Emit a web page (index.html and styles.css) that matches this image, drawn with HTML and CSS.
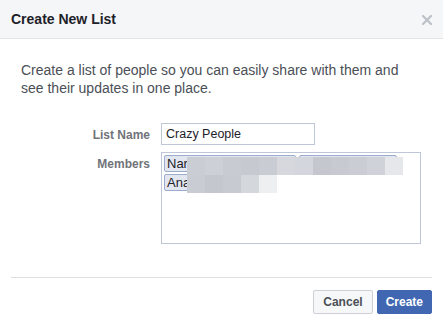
FILE: index.html
```html
<!DOCTYPE html>
<html lang="en">
<head>
  <meta charset="UTF-8" />
  <title>Create New List</title>
  <link rel="stylesheet" href="styles.css">
</head>
<body>
  <div class="dialog">
    <div class="dialog-header">
      <h1>Create New List</h1>
      <svg class="close" width="10" height="10" viewBox="0 0 10 10">
        <path d="M1 1 L9 9 M9 1 L1 9" stroke="#bcc0c7" stroke-width="2.2" stroke-linecap="square" />
      </svg>
    </div>

    <div class="dialog-body">
      <p class="intro">Create a list of people so you can easily share with them and see their updates in one place.</p>

      <div class="form">
        <label class="label">List Name</label>
        <input class="text-input" type="text" value="Crazy People" />

        <label class="label">Members</label>
        <div class="members">
          <span class="token token-a">Nar</span>
          <span class="token token-b"></span>
          <span class="token token-c">Ana</span>
          <div class="blur blur-1">
            <i style="background:#cacdd3"></i><i style="background:#cdd0d6"></i><i style="background:#c8cbd2"></i><i style="background:#c6c9cf"></i><i style="background:#c9ccd2"></i><i style="background:#d6d8dd"></i><i style="background:#d3d6dc"></i><i style="background:#c4c7cd"></i><i style="background:#c7cad0"></i><i style="background:#cacdd3"></i><i style="background:#cfd2d8"></i><i style="background:#e6e7eb"></i>
          </div>
          <div class="blur blur-2">
            <i style="background:#c9ccd2"></i><i style="background:#c4c7cd"></i><i style="background:#c7cad0"></i><i style="background:#d4d7dc"></i><i style="background:#eeeff1"></i>
          </div>
        </div>
      </div>
    </div>

    <div class="dialog-footer">
      <button class="btn btn-cancel">Cancel</button>
      <button class="btn btn-create">Create</button>
    </div>
  </div>
</body>
</html>
```

FILE: styles.css
```css
body {
  margin: 0;
  background: #fff;
  font-family: 'Liberation Sans', Arial, sans-serif;
}
.dialog {
  width: 443px;
}
.dialog-header {
  height: 38px;
  background: #f5f6f7;
  border-bottom: 1px solid #e5e5e5;
  display: flex;
  align-items: center;
  justify-content: space-between;
  padding: 0 11px 0 11px;
}
.dialog-header h1 {
  margin: 0;
  font-size: 14px;
  font-weight: bold;
  color: #1d2129;
}
.close {
  display: block;
  margin-top: 1px;
}
.dialog-body {
  padding: 22px 21px 0 21px;
}
.intro {
  margin: 0;
  font-size: 14px;
  line-height: 18px;
  color: #4b4f56;
}
.form {
  margin-top: 26px;
  display: grid;
  grid-template-columns: 129px 260px;
  column-gap: 11px;
  row-gap: 7px;
}
.label {
  text-align: right;
  font-size: 12px;
  font-weight: bold;
  color: #717378;
  padding-top: 5px;
}
.text-input {
  box-sizing: border-box;
  width: 154px;
  height: 22px;
  margin: 0;
  border: 1px solid #bdc7d8;
  padding: 0 4px;
  font-family: 'Liberation Sans', Arial, sans-serif;
  font-size: 12.5px;
  color: #1d2129;
  outline: none;
}
.members {
  position: relative;
  box-sizing: border-box;
  height: 92px;
  border: 1px solid #bdc7d8;
  padding: 2px 0 0 2px;
  display: flex;
  flex-wrap: wrap;
  align-content: flex-start;
  gap: 2px 3px;
}
.token {
  box-sizing: border-box;
  height: 17px;
  border: 1px solid #9daccc;
  border-radius: 2px;
  background: #e2e6f0;
  font-size: 13px;
  line-height: 15px;
  padding-left: 2px;
  color: #1d2129;
}
.token-a {
  width: 132px;
}
.token-b {
  width: 98px;
}
.token-c {
  width: 60px;
}
.blur {
  position: absolute;
  display: flex;
  height: 18px;
}
.blur i {
  display: block;
  width: 18px;
  height: 100%;
}
.blur-1 {
  left: 25px;
  top: 4px;
}
.blur-2 {
  left: 25px;
  top: 22px;
}
.dialog-footer {
  margin: 33px 11px 0 11px;
  border-top: 1px solid #dddfe2;
  padding-top: 12px;
  display: flex;
  justify-content: flex-end;
  gap: 4px;
}
.btn {
  height: 24px;
  padding: 0 8px;
  border-radius: 2px;
  font-family: 'Liberation Sans', Arial, sans-serif;
  font-size: 12px;
  font-weight: bold;
  cursor: pointer;
}
.btn-cancel {
  padding: 0 9px;
  background: #f6f7f9;
  border: 1px solid #ced0d4;
  color: #4b4f56;
}
.btn-create {
  background: #4267b2;
  border: 1px solid #4267b2;
  color: #fff;
}
```
